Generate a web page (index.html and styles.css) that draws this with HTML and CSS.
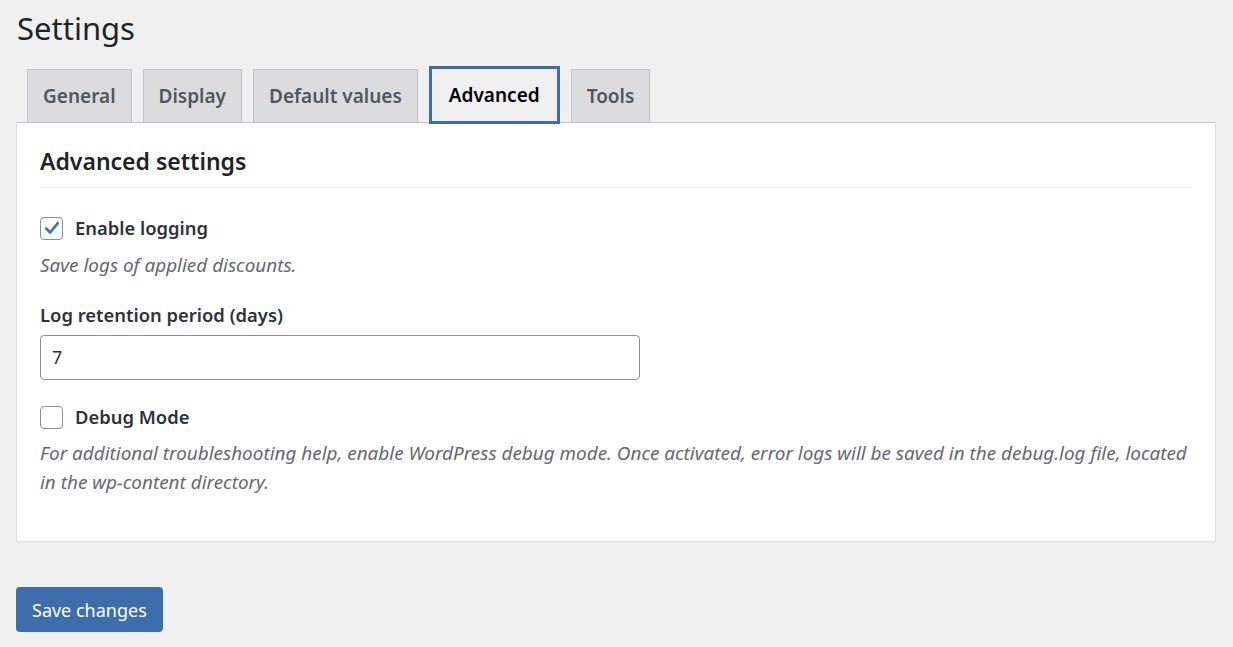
FILE: index.html
```html
<!DOCTYPE html>
<html>
<head>
<title>Settings</title>
<link rel="stylesheet" href="styles.css">
</head>
<body>
<div class='wrap'>
<h1 class='pageTitle'>Settings</h1>

<div class='tabBar'>
  <a href="#" class='tab'>General</a>
  <a href="#" class='tab'>Display</a>
  <a href="#" class='tab'>Default values</a>
  <a href="#" class='tab tabActive'>Advanced</a>
  <a href="#" class='tab'>Tools</a>
</div>

<div class='panel'>
  <h2 class='panelTitle'>Advanced settings</h2>

  <div class='field fieldFirst'>
    <label class='checkRow'>
      <span class='checkBox checked'>
        <svg width="18" height="18" viewBox="0 0 20 20"><path d="M3.5 10.5 L8 15 L16.5 4.5" fill="none" stroke="#3a78c0" stroke-width="3" stroke-linecap="round" stroke-linejoin="round"/></svg>
      </span>
      Enable logging
    </label>
    <p class='desc'>Save logs of applied discounts.</p>
  </div>

  <div class='field fieldInput'>
    <label class='fieldLabel'>Log retention period (days)</label>
    <div class='textInput'>7</div>
  </div>

  <div class='field fieldDebug'>
    <label class='checkRow'>
      <span class='checkBox'></span>
      Debug Mode
    </label>
    <p class='desc'>For additional troubleshooting help, enable WordPress debug mode. Once activated, error logs will be saved in the debug.log file, located in the wp-content directory.</p>
  </div>
</div> <!-- end panel -->

<div class='actions'>
  <button class='btnPrimary'>Save changes</button>
</div>
</div> <!-- end wrap -->
</body>
</html>
```

FILE: styles.css
```css
body { font-family:"Noto Sans",sans-serif; color:#1d2327; background:#f0f0f1; margin:0px; padding:0px; }
.wrap { padding:0px 17px 0px 16px; }
.pageTitle { font-size:31px; font-weight:400; margin:0px; padding:8px 0px 0px 1px; line-height:40px; color:#1d2327; }
.tabBar { display:flex; gap:11px; padding:18px 0px 0px 11px; align-items:flex-end; }
.tab { display:block; height:52px; line-height:53px; padding:0px 15px; font-size:19px; font-weight:600; color:#50575e; background:#dcdcde; border:1px solid #c3c4c7; border-bottom:none; text-decoration:none; }
.tabActive { background:#f0f0f1; color:#000000; border:3px solid #3d6dab; height:52px; line-height:53px; padding:0px 17px; margin-bottom:-2px; position:relative; z-index:1; }
.panel { background:#ffffff; border:1px solid #dcdcde; border-top:1px solid #c3c4c7; padding:0px 23px 44px 23px; margin-bottom:45px; }
.panelTitle { font-size:23px; font-weight:600; margin:0px; padding:22px 0px 0px 0px; line-height:32px; border-bottom:1px solid #f0f0f1; padding-bottom:10px; color:#1d2327; }
.fieldFirst { margin-top:28px; }
.fieldInput { margin-top:26px; }
.fieldDebug { margin-top:25px; }
.checkRow { display:flex; align-items:center; gap:12px; font-size:18.4px; font-weight:600; color:#2c3338; line-height:24px; }
.checkBox { box-sizing:border-box; width:23px; height:23px; border:1px solid #8c8f94; border-radius:4px; background:#ffffff; display:flex; align-items:center; justify-content:center; }
.desc { font-size:18.9px; font-style:italic; color:#646970; margin:11px 0px 0px 0px; line-height:29px; }
.fieldDebug .desc { margin-top:10px; }
.fieldLabel { display:block; font-size:18.4px; font-weight:600; color:#2c3338; line-height:24px; margin-top:-3px; }
.textInput { box-sizing:border-box; width:600px; height:45px; margin-top:8px; border:1px solid #8c8f94; border-radius:4px; padding:0px 11px; line-height:43px; font-size:18px; color:#2c3338; }
.actions { }
.btnPrimary { font-family:"Noto Sans",sans-serif; font-size:18px; color:#ffffff; background:#3d6dab; border:none; border-radius:4px; height:45px; padding:0px 16px; cursor:pointer; }
```
